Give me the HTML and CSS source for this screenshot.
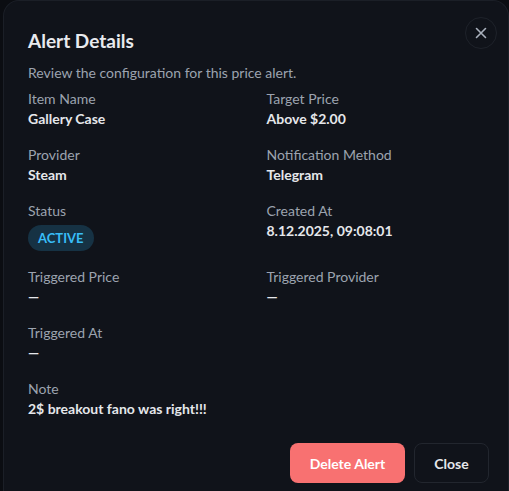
FILE: index.html
```html
<!DOCTYPE html>
<html lang="en">
<head>
<meta charset="utf-8">
<title>Alert Details</title>
<link rel="stylesheet" href="styles.css">
</head>
<body>
<div class="modal">
  <button class="x-btn" aria-label="Close">
    <svg width="12" height="12" viewBox="0 0 12 12" fill="none" stroke="currentColor" stroke-width="1.6" stroke-linecap="round"><path d="M1.5 1.5l9 9M10.5 1.5l-9 9"/></svg>
  </button>
  <header class="head">
    <h2 class="title">Alert Details</h2>
    <p class="sub">Review the configuration for this price alert.</p>
  </header>
  <div class="grid">
    <div class="field"><div class="label">Item Name</div><div class="value">Gallery Case</div></div>
    <div class="field"><div class="label">Target Price</div><div class="value">Above $2.00</div></div>
    <div class="field"><div class="label">Provider</div><div class="value">Steam</div></div>
    <div class="field"><div class="label">Notification Method</div><div class="value">Telegram</div></div>
    <div class="field"><div class="label">Status</div><div class="value"><span class="badge">ACTIVE</span></div></div>
    <div class="field"><div class="label">Created At</div><div class="value">8.12.2025, 09:08:01</div></div>
    <div class="field"><div class="label">Triggered Price</div><div class="value">—</div></div>
    <div class="field"><div class="label">Triggered Provider</div><div class="value">—</div></div>
    <div class="field"><div class="label">Triggered At</div><div class="value">—</div></div>
    <div class="field"></div>
    <div class="field full"><div class="label">Note</div><div class="value">2$ breakout fano was right!!!</div></div>
  </div>
  <div class="actions">
    <button class="btn danger">Delete Alert</button>
    <button class="btn ghost">Close</button>
  </div>
</div>
</body>
</html>
```

FILE: styles.css
```css
* { box-sizing: border-box; }
html, body { margin: 0; height: 100%; }
body {
  background: #0b0d12;
  font-family: "Lato", "Noto Sans", sans-serif;
  color: #e5e7eb;
  overflow: hidden;
}
.modal {
  position: relative;
  margin-left: 3px;
  width: 506px;
  min-height: 100vh;
  background: #10131a;
  border: 1px solid #1b1f27;
  border-bottom: none;
  border-radius: 16px 16px 0 0;
  padding: 26px 19px 0 24px;
}
.x-btn {
  position: absolute;
  top: 16px;
  right: 11px;
  width: 32px;
  height: 32px;
  border-radius: 50%;
  border: 1px solid #1e222a;
  background: transparent;
  color: #aab1bd;
  display: flex;
  align-items: center;
  justify-content: center;
  padding: 0;
}
.head { margin-bottom: 6px; }
.title {
  margin: 0;
  font-size: 19px;
  line-height: 28px;
  font-weight: 700;
  color: #e8eaee;
}
.sub {
  margin: 8px 0 0;
  font-size: 14px;
  line-height: 20px;
  color: #9ca3af;
}
.grid {
  display: grid;
  grid-template-columns: 1fr 1fr;
  column-gap: 16px;
  row-gap: 16px;
}
.full { grid-column: 1 / -1; }
.label {
  font-size: 14px;
  line-height: 20px;
  color: #9ca3af;
}
.value {
  font-size: 14px;
  line-height: 20px;
  font-weight: 700;
  color: #e5e7eb;
}
.badge {
  display: inline-block;
  margin-top: 4px;
  padding: 3px 10px;
  border-radius: 999px;
  background: #163244;
  color: #38bdf8;
  font-size: 13px;
  line-height: 20px;
  font-weight: 700;
  letter-spacing: 0;
}
.actions {
  margin-top: 24px;
  display: flex;
  justify-content: flex-end;
  gap: 9px;
}
.btn {
  font-family: inherit;
  font-size: 14px;
  font-weight: 700;
  height: 40px;
  border-radius: 8px;
  padding: 0;
  white-space: nowrap;
}
.danger {
  background: #f87171;
  color: #fff;
  border: none;
  width: 115px;
}
.ghost {
  background: transparent;
  color: #e5e7eb;
  border: 1px solid #22262e;
  width: 75px;
}
```
